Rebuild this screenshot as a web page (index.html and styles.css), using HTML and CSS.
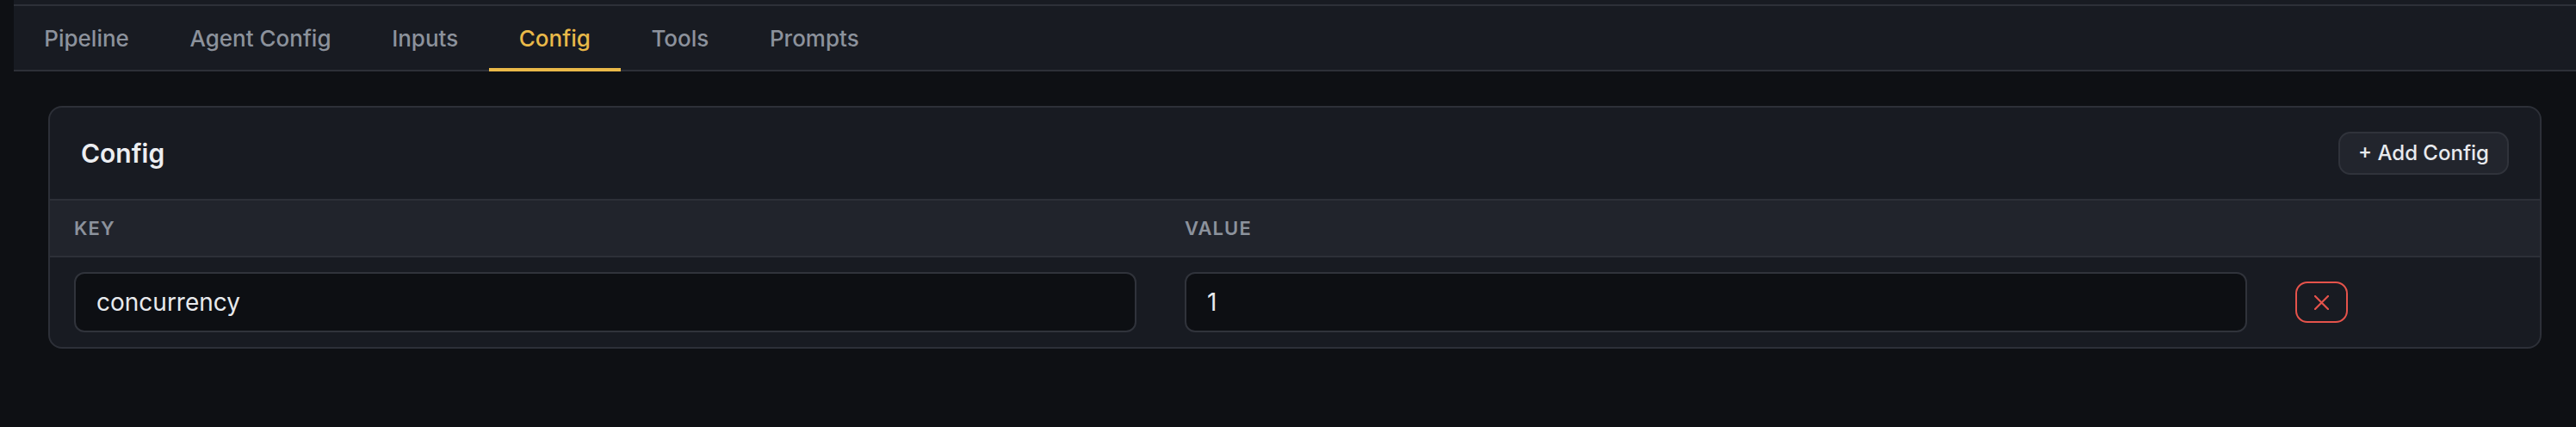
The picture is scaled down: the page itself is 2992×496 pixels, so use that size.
FILE: index.html
```html
<!DOCTYPE html>
<html>
<head>
<meta charset="utf-8">
<link rel="stylesheet" href="styles.css">
</head>
<body>
<div class="page">
  <div class="topstrip"></div>
  <nav class="tabbar">
    <div class="tab">Pipeline</div>
    <div class="tab">Agent Config</div>
    <div class="tab">Inputs</div>
    <div class="tab active">Config</div>
    <div class="tab">Tools</div>
    <div class="tab">Prompts</div>
  </nav>
  <main class="content">
    <section class="card">
      <header class="card-head">
        <h2 class="card-title">Config</h2>
        <button class="btn-add">+ Add Config</button>
      </header>
      <div class="thead">
        <div class="th">Key</div>
        <div class="th">Value</div>
        <div class="th"></div>
      </div>
      <div class="trow">
        <div class="td"><div class="input">concurrency</div></div>
        <div class="td"><div class="input">1</div></div>
        <div class="td">
          <button class="btn-del" aria-label="Remove">
            <svg width="17" height="17" viewBox="0 0 17 17"><path d="M1 1 L16 16 M16 1 L1 16" stroke="#e5534b" stroke-width="2.2" stroke-linecap="round" fill="none"/></svg>
          </button>
        </div>
      </div>
    </section>
  </main>
</div>
</body>
</html>
```
FILE: styles.css
```css
* { box-sizing: border-box; }
html, body { margin: 0; padding: 0; }
body {
  background: #0e1014;
  font-family: Inter, "Noto Sans", sans-serif;
  width: 2992px;
  height: 496px;
  overflow: hidden;
}
.page {
  margin-left: 16px;
}
.topstrip {
  height: 7px;
  background: #181b22;
  border-bottom: 2px solid #2d3038;
}
.tabbar {
  display: flex;
  background: #181b22;
  border-bottom: 2px solid #2d3038;
}
.tab {
  padding: 18px 35.3px 14px;
  line-height: 40px;
  font-size: 26px;
  font-weight: 500;
  color: #8c929c;
  border-bottom: 4px solid transparent;
  margin-bottom: -2px;
}
.tab.active {
  color: #e9b949;
  border-bottom-color: #e9b949;
}
.content {
  padding: 40px;
}
.card {
  background: #181b22;
  border: 2px solid #2d3038;
  border-radius: 16px;
  overflow: hidden;
}
.card-head {
  display: flex;
  justify-content: space-between;
  align-items: center;
  padding: 28px 36px;
  border-bottom: 2px solid #2d3038;
}
.card-title {
  margin: 0;
  font-size: 30px;
  font-weight: 600;
  color: #eceef1;
  line-height: 40px;
}
.btn-add {
  font-family: inherit;
  font-size: 24px;
  font-weight: 500;
  color: #e8eaed;
  background: #22252d;
  border: 2px solid #30333b;
  border-radius: 14px;
  padding: 8px 21px;
  line-height: 30px;
  margin: 0;
}
.thead, .trow {
  display: grid;
  grid-template-columns: 1fr 1fr 312px;
}
.thead {
  background: #21242c;
  border-bottom: 2px solid #2d3038;
}
.th {
  padding: 18px 28px;
  line-height: 28px;
  font-size: 22px;
  font-weight: 600;
  letter-spacing: 0.05em;
  text-transform: uppercase;
  color: #8c929c;
}
.td {
  padding: 17px 28px;
  display: flex;
  align-items: center;
}
.input {
  width: 100%;
  height: 70px;
  background: #0d0f13;
  border: 2px solid #30333b;
  border-radius: 12px;
  padding: 0 24px;
  display: flex;
  align-items: center;
  font-size: 28px;
  color: #e8eaed;
}
.btn-del {
  width: 61px;
  height: 48px;
  background: transparent;
  border: 2px solid #e5534b;
  border-radius: 14px;
  display: flex;
  align-items: center;
  justify-content: center;
  padding: 0;
  margin: 0;
}
.btn-del svg { display: block; }
```
